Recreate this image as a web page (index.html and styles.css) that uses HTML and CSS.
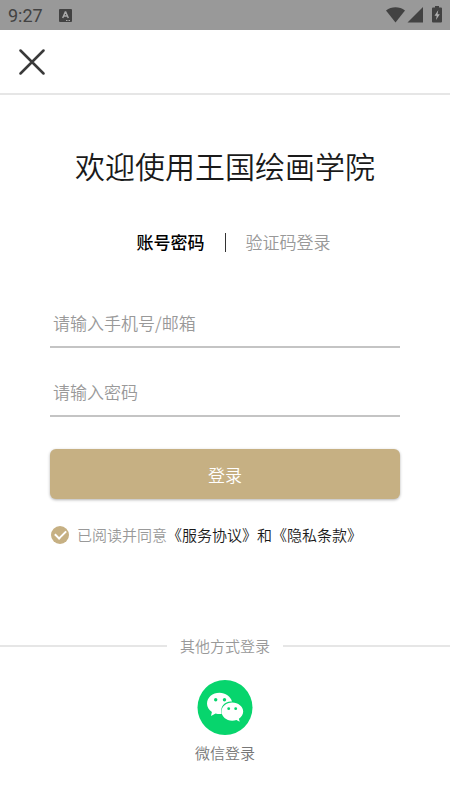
FILE: index.html
```html
<!DOCTYPE html>
<html lang="zh-CN">
<head>
<meta charset="utf-8">
<meta name="viewport" content="width=device-width, initial-scale=1">
<title>登录</title>
<link rel="stylesheet" href="styles.css">
</head>
<body>
<div class="status">
  <span class="time">9:27</span>
  <svg class="notice" width="13" height="13" viewBox="0 0 13 13" aria-hidden="true">
    <rect width="13" height="13" rx="1" fill="#424242"/>
    <path d="M3.700 9 6.300 3h.4L9.300 9M4.800 7h3.400" fill="none" stroke="#a8a8a8" stroke-width="1.500"/>
    <path d="M7 11.500h1.500M9.500 11.500H11" stroke="#a8a8a8" stroke-width="1"/>
  </svg>
  <svg class="signals" width="57" height="18" viewBox="0 0 57 18" aria-hidden="true">
    <g fill="#424242">
      <path d="M1 4.500C6.500.2 14.500.2 20 4.500L10.500 16.500z"/>
      <path d="M38 1v15.500H22.500z"/>
      <path d="M50 1.500V0h4v1.500h2q1 0 1 1v13q0 1-1 1h-8q-1 0-1-1v-13q0-1 1-1z"/>
    </g>
    <path d="M53.300 4 49.500 9.700h2.200L51 14l3.800-5.700h-2.300z" fill="#b0b0b0"/>
  </svg>
</div>
<header class="bar">
  <button class="close" type="button" aria-label="关闭">
    <svg width="26" height="26" viewBox="0 0 26 26" aria-hidden="true"><path d="M1.500 1.500l23 23M24.500 1.500l-23 23" stroke="#3a3a3a" stroke-width="2.500" stroke-linecap="round"/></svg>
  </button>
</header>
<main>
  <h1>欢迎使用王国绘画学院</h1>
  <nav class="tabs">
    <button class="tab active" type="button">账号密码</button>
    <span class="divider"></span>
    <button class="tab" type="button">验证码登录</button>
  </nav>
  <form class="form">
    <input class="field" type="text" aria-label="手机号或邮箱" placeholder="请输入手机号/邮箱">
    <input class="field" type="password" aria-label="密码" placeholder="请输入密码">
    <button class="submit" type="button">登录</button>
    <div class="agree">
      <input class="check" id="agree" type="checkbox" checked>
      <label for="agree">已阅读并同意</label><a href="#terms">《服务协议》</a><span class="and">和</span><a href="#privacy">《隐私条款》</a>
    </div>
  </form>
  <section class="other">
    <h2>其他方式登录</h2>
    <button class="wechat" type="button">
      <svg width="56" height="56" viewBox="0 0 56 56" aria-hidden="true">
        <circle cx="28" cy="28.500" r="27.500" fill="#07d56d"/>
        <path d="M22.500 13.800C15.500 13.800 10 18.400 10 24.500c0 3.500 1.900 6.400 4.900 8.400L14 37l4.600-2.500c1.900.6 4 .7 6 .5C22.500 27 28.500 21.800 35 22.500 33.500 17.300 28.500 13.800 22.500 13.800z" fill="#fff"/>
        <path d="M35.200 23.500C29.200 23.500 24.500 27.500 24.500 32.500s4.700 9.200 10.700 9.200c1.500 0 2.900-.3 4.200-.7l3.300 1.800-.8-3.100c2.600-1.800 4.300-4.300 4.300-7.200 0-5-5-9-11-9z" fill="#fff"/>
        <g fill="#07d56d"><circle cx="18.700" cy="20.700" r="1.700"/><circle cx="27.500" cy="20.700" r="1.700"/><circle cx="31.700" cy="29.700" r="1.400"/><circle cx="38.700" cy="29.700" r="1.400"/></g>
      </svg>
      <span>微信登录</span>
    </button>
  </section>
</main>
</body>
</html>
```
FILE: styles.css
```css
* {
  box-sizing: border-box;
}

body {
  margin: 0;
  background: #fff;
  color: #1a1a1a;
  font-family: "Noto Sans CJK SC", sans-serif;
  font-weight: 350;
}

button {
  padding: 0;
  border: 0;
  background: none;
  font-family: inherit;
  font-weight: inherit;
  cursor: pointer;
}

svg {
  display: block;
}

.status {
  display: flex;
  align-items: center;
  height: 30px;
  padding: 0 8px;
  background: #999;
  color: #424242;
}

.time {
  font-family: Roboto, sans-serif;
  font-size: 18px;
  font-weight: 400;
}

.notice {
  margin-left: 16px;
}

.signals {
  margin-left: auto;
}

.bar {
  display: flex;
  align-items: center;
  height: 65px;
  padding: 0 19px;
  border-bottom: 2px solid #e6e6e6;
}

h1 {
  margin: 48px 0 0;
  font-size: 30px;
  font-weight: inherit;
  line-height: 44px;
  text-align: center;
}

.tabs {
  display: grid;
  grid-template-columns: 1fr auto 1fr;
  align-items: center;
  gap: 20px;
  margin-top: 42px;
}

.tab {
  justify-self: start;
  color: #999;
  font-size: 17px;
  line-height: 26px;
}

.active {
  justify-self: end;
  color: #000;
  font-weight: 500;
}

.divider {
  width: 1px;
  height: 19px;
  background: #333;
}

.form {
  display: flex;
  flex-direction: column;
  margin: 44px 50px 0;
}

.field {
  width: 100%;
  height: 49px;
  margin-bottom: 20px;
  padding: 0 3px;
  border: 0;
  border-bottom: 2px solid #c4c4c4;
  background: none;
  font-family: inherit;
  font-size: 17px;
  font-weight: inherit;
  outline: none;
}

.field::placeholder {
  color: #999;
}

.submit {
  height: 50px;
  margin-top: 12px;
  border-radius: 6px;
  background: #c6b083;
  box-shadow: 0 1px 3px rgba(0, 0, 0, 0.3);
  color: #fff;
  font-size: 17px;
}

.agree {
  display: flex;
  align-items: center;
  margin-top: 25px;
  color: #999;
  font-size: 15px;
  line-height: 22px;
}

.agree a,
.and {
  color: #1a1a1a;
  text-decoration: none;
}

.check {
  display: grid;
  place-items: center;
  flex: none;
  width: 18px;
  height: 18px;
  margin: 0 8px 0 1px;
  border-radius: 50%;
  background: #c6b083;
  appearance: none;
}

.check:checked::before {
  content: "";
  width: 9px;
  height: 5px;
  margin-bottom: 3px;
  border: solid #fff;
  border-width: 0 0 2px 2px;
  transform: rotate(-45deg);
}

.other {
  margin-top: 89px;
}

h2 {
  display: flex;
  align-items: center;
  gap: 13px;
  margin: 0;
  color: #999;
  font-size: 15px;
  font-weight: inherit;
  line-height: 22px;
}

h2::before,
h2::after {
  content: "";
  flex: 1;
  height: 2px;
  background: #e6e6e6;
}

.wechat {
  display: flex;
  flex-direction: column;
  align-items: center;
  gap: 7px;
  margin: 22px auto 0;
  color: #777;
  font-size: 15px;
  line-height: 22px;
}
```
